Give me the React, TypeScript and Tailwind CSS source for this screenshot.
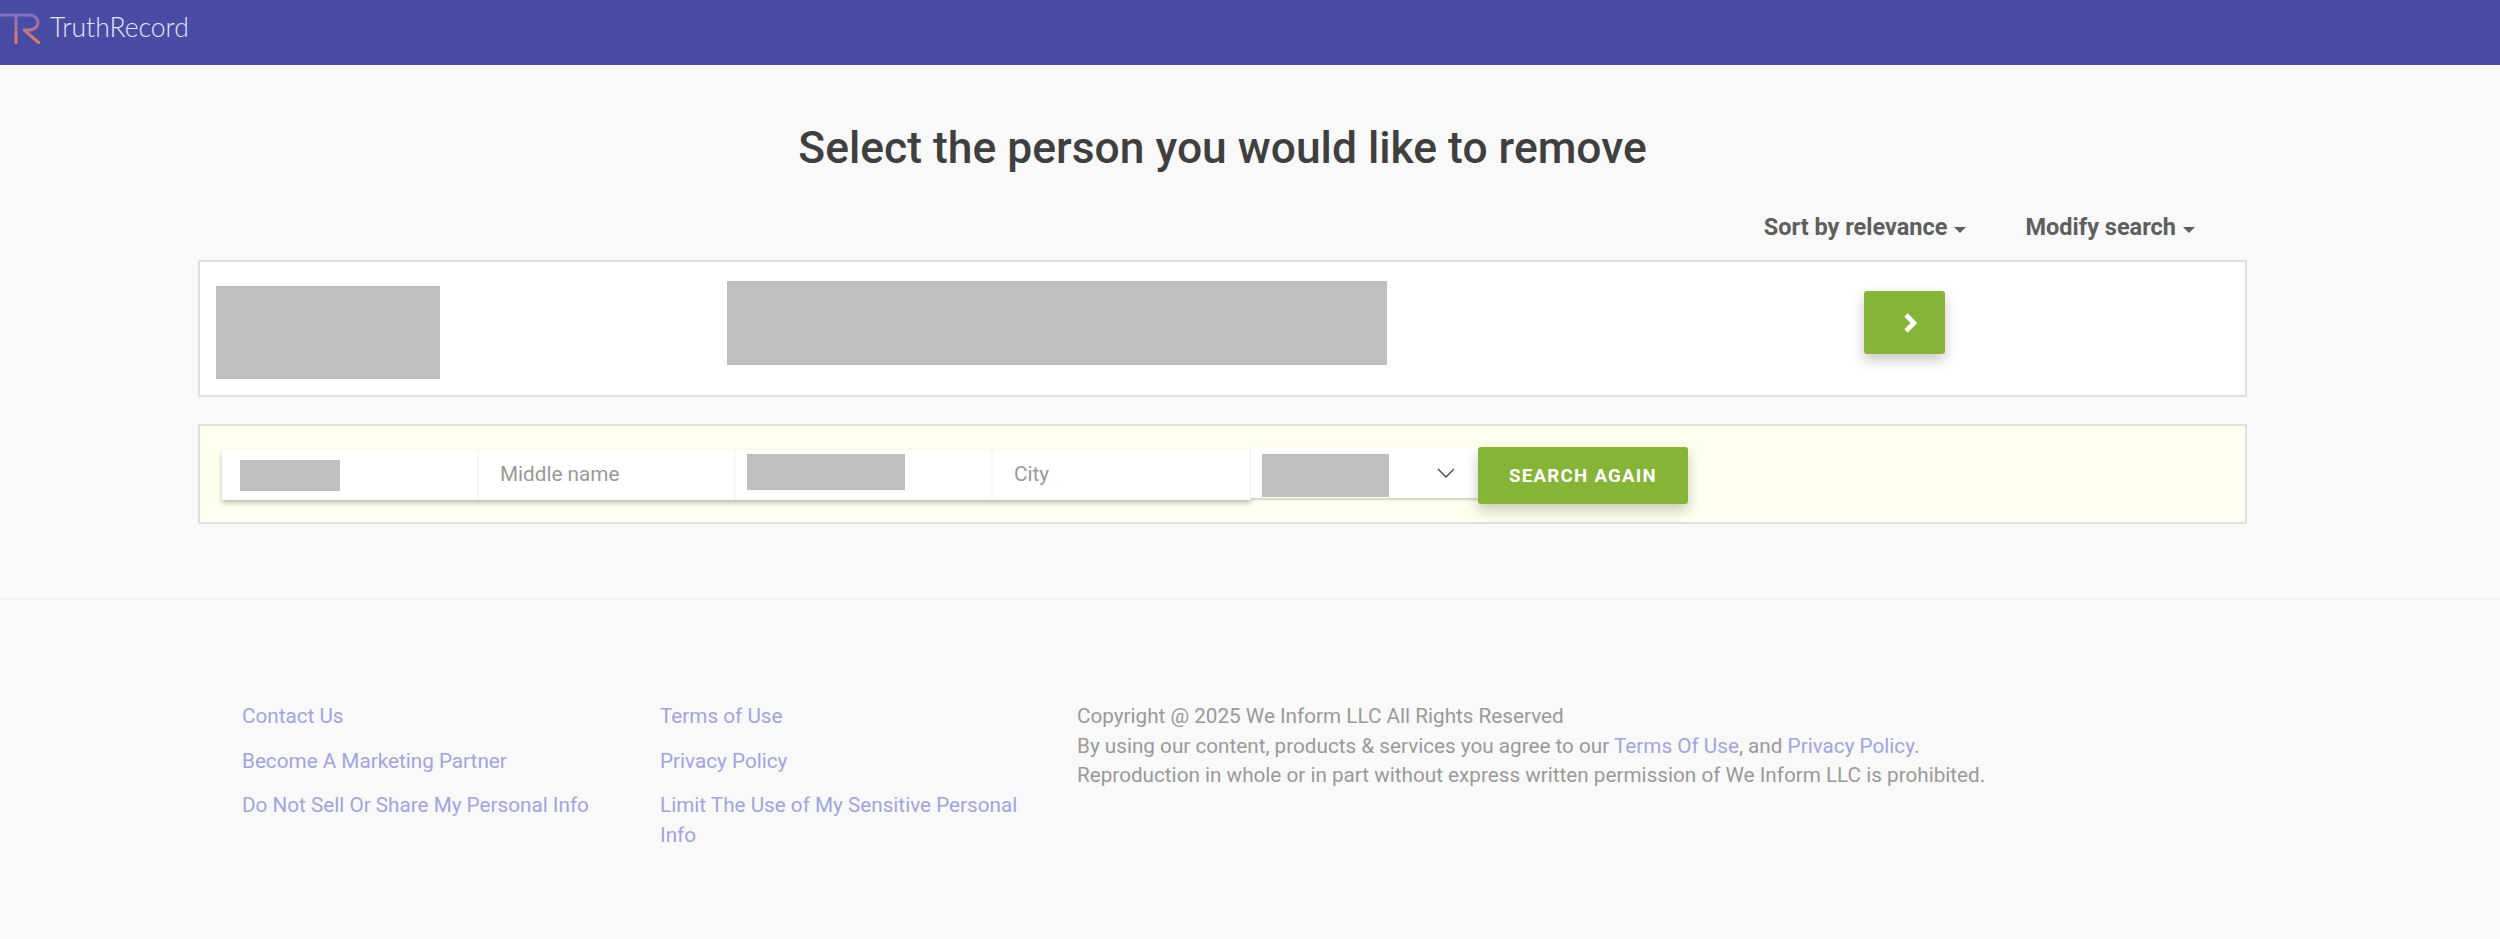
const Gray = ({ className }: { className: string }) => <div className={`bg-[#bfbfbf] ${className}`} />;

const Field = ({ children, last }: { children: React.ReactNode; last?: boolean }) => (
  <div className={`relative flex h-full w-[257px] items-center ${last ? "" : "border-r-2 border-[#f7f7f7]"}`}>{children}</div>
);

export default function App() {
  return (
    <div className="min-h-[939px] bg-[#f9f9f9] font-['Roboto',sans-serif]">
      <header className="flex h-[65px] items-start bg-[#484ca5]">
        <svg width="41" height="32" viewBox="0 0 41 32" className="mt-[13px] shrink-0" fill="none">
          <defs>
            <linearGradient id="lg" gradientUnits="userSpaceOnUse" x1="0" y1="0" x2="0" y2="31">
              <stop offset="0" stopColor="#7d6fc6" />
              <stop offset="1" stopColor="#ee7a58" />
            </linearGradient>
          </defs>
          <path d="M0 2H29C41 2 41 17 29 17H24L38.5 29.5M16 2V29.5" stroke="url(#lg)" strokeWidth="3" strokeLinecap="round" strokeLinejoin="round" />
        </svg>
        <span className="ml-[9px] mt-[10px] font-['Lato',sans-serif] text-[26.5px] font-light leading-[34px] text-[#e4e4f4]">TruthRecord</span>
      </header>

      <main className="px-[198px] pr-[253px]">
        <h1 className="pt-[55px] text-center text-[44.4px] font-medium leading-[56px] text-[#3f3f3f]">Select the person you would like to remove</h1>
        <div className="mt-[36px] flex h-[32px] items-center justify-end pr-[52px] text-[23.5px] font-bold text-[#5e5e5e]">
          <span className="flex items-center">Sort by relevance<i className="ml-[7px] mt-[3px] border-x-[6px] border-t-[6px] border-x-transparent border-t-[#5e5e5e]" /></span>
          <span className="ml-[59px] flex items-center">Modify search<i className="ml-[7px] mt-[3px] border-x-[6px] border-t-[6px] border-x-transparent border-t-[#5e5e5e]" /></span>
        </div>

        <section className="mt-[16px] flex h-[137px] border-2 border-[#e0e0e0] bg-white">
          <Gray className="ml-[16px] mt-[24px] h-[93px] w-[224px]" />
          <Gray className="ml-[287px] mt-[19px] h-[84px] w-[660px]" />
          <button className="ml-[477px] mt-[29px] flex h-[63px] w-[81px] items-center justify-center rounded-[3px] bg-[#85b436] shadow-[0_6px_14px_rgba(0,0,0,0.22)]">
            <svg width="16" height="22" viewBox="0 0 16 22" className="ml-[12px]"><path d="M3 3l8 8-8 8" fill="none" stroke="#fff" strokeWidth="4.6" /></svg>
          </button>
        </section>

        <section className="mt-[27px] flex h-[100px] items-start border-2 border-[#e0e0e0] bg-[#ffffee] pl-[22px]">
          <div className="mt-[24px] flex h-[50px] w-[1029px] items-center bg-white shadow-[0_3px_5px_rgba(0,0,0,0.25)] text-[20.7px] text-[#999]">
            <Field><Gray className="ml-[18px] mt-[1px] h-[31px] w-[100px]" /></Field>
            <Field><span className="ml-[21px]">Middle name</span></Field>
            <Field><Gray className="ml-[11px] mb-[6px] h-[36px] w-[158px]" /></Field>
            <Field last><span className="ml-[21px]">City</span></Field>
          </div>
          <div className="mt-[21px] flex h-[51px] w-[227px] items-center bg-white shadow-[0_2px_2px_rgba(0,0,0,0.18)]">
            <Gray className="ml-[11px] mt-[6px] h-[43px] w-[127px]" />
            <svg width="18" height="10" viewBox="0 0 18 10" className="ml-[48px]"><path d="M1 1l8 8 8-8" fill="none" stroke="#444" strokeWidth="1.3" /></svg>
          </div>
          <button className="mt-[21px] h-[57px] w-[210px] rounded-[3px] bg-[#85b436] pt-[2px] text-[18.7px] font-bold tracking-[1.25px] text-white shadow-[0_6px_14px_rgba(0,0,0,0.22)]">SEARCH AGAIN</button>
        </section>
      </main>

      <footer className="mt-[74px] border-t-2 border-[#f0f0f0] pl-[242px] pt-[102px] text-[20.7px] leading-[29.5px] text-[#999]">
        <div className="flex">
          <ul className="w-[418px] space-y-[15px] text-[#a0a5dc]">
            <li>Contact Us</li>
            <li>Become A Marketing Partner</li>
            <li>Do Not Sell Or Share My Personal Info</li>
          </ul>
          <ul className="w-[417px] space-y-[15px] pr-[40px] text-[#a0a5dc]">
            <li>Terms of Use</li>
            <li>Privacy Policy</li>
            <li>Limit The Use of My Sensitive Personal Info</li>
          </ul>
          <div>
            <p>Copyright @ 2025 We Inform LLC All Rights Reserved</p>
            <p>By using our content, products &amp; services you agree to our <span className="text-[#a0a5dc]">Terms Of Use</span>, and <span className="text-[#a0a5dc]">Privacy Policy</span>.</p>
            <p>Reproduction in whole or in part without express written permission of We Inform LLC is prohibited.</p>
          </div>
        </div>
      </footer>
    </div>
  );
}
